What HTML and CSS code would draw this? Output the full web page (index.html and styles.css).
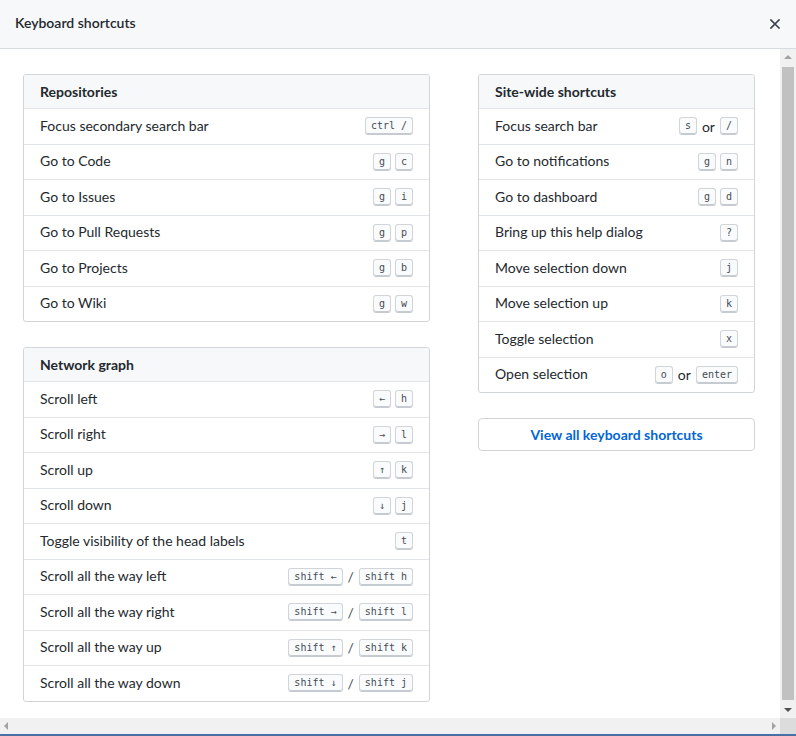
FILE: index.html
```html
<!DOCTYPE html>
<html>
<head>
<meta charset="utf-8">
<link rel="stylesheet" href="styles.css">
</head>
<body>
<div class="dialog">
  <header class="dialog-header">
    <h1 class="dialog-title">Keyboard shortcuts</h1>
    <svg class="close" width="10" height="10" viewBox="0 0 10 10"><path d="M1 1L9 9M9 1L1 9" stroke="#3d444c" stroke-width="1.7" stroke-linecap="square"/></svg>
  </header>
  <div class="frame">
    <div class="upper">
      <div class="content">
        <div class="col col-left">
          <section class="box">
            <div class="box-header">Repositories</div>
            <div class="row"><span>Focus secondary search bar</span><span class="keys"><kbd>ctrl /</kbd></span></div>
            <div class="row"><span>Go to Code</span><span class="keys"><kbd>g</kbd><kbd>c</kbd></span></div>
            <div class="row"><span>Go to Issues</span><span class="keys"><kbd>g</kbd><kbd>i</kbd></span></div>
            <div class="row"><span>Go to Pull Requests</span><span class="keys"><kbd>g</kbd><kbd>p</kbd></span></div>
            <div class="row"><span>Go to Projects</span><span class="keys"><kbd>g</kbd><kbd>b</kbd></span></div>
            <div class="row"><span>Go to Wiki</span><span class="keys"><kbd>g</kbd><kbd>w</kbd></span></div>
          </section>
          <section class="box">
            <div class="box-header">Network graph</div>
            <div class="row"><span>Scroll left</span><span class="keys"><kbd>←</kbd><kbd>h</kbd></span></div>
            <div class="row"><span>Scroll right</span><span class="keys"><kbd>→</kbd><kbd>l</kbd></span></div>
            <div class="row"><span>Scroll up</span><span class="keys"><kbd>↑</kbd><kbd>k</kbd></span></div>
            <div class="row"><span>Scroll down</span><span class="keys"><kbd>↓</kbd><kbd>j</kbd></span></div>
            <div class="row"><span>Toggle visibility of the head labels</span><span class="keys"><kbd>t</kbd></span></div>
            <div class="row"><span>Scroll all the way left</span><span class="keys"><kbd>shift ←</kbd><span class="sep">/</span><kbd>shift h</kbd></span></div>
            <div class="row"><span>Scroll all the way right</span><span class="keys"><kbd>shift →</kbd><span class="sep">/</span><kbd>shift l</kbd></span></div>
            <div class="row"><span>Scroll all the way up</span><span class="keys"><kbd>shift ↑</kbd><span class="sep">/</span><kbd>shift k</kbd></span></div>
            <div class="row"><span>Scroll all the way down</span><span class="keys"><kbd>shift ↓</kbd><span class="sep">/</span><kbd>shift j</kbd></span></div>
          </section>
        </div>
        <div class="col col-right">
          <section class="box">
            <div class="box-header">Site-wide shortcuts</div>
            <div class="row"><span>Focus search bar</span><span class="keys"><kbd>s</kbd><span class="or">or</span><kbd>/</kbd></span></div>
            <div class="row"><span>Go to notifications</span><span class="keys"><kbd>g</kbd><kbd>n</kbd></span></div>
            <div class="row"><span>Go to dashboard</span><span class="keys"><kbd>g</kbd><kbd>d</kbd></span></div>
            <div class="row"><span>Bring up this help dialog</span><span class="keys"><kbd>?</kbd></span></div>
            <div class="row"><span>Move selection down</span><span class="keys"><kbd>j</kbd></span></div>
            <div class="row"><span>Move selection up</span><span class="keys"><kbd>k</kbd></span></div>
            <div class="row"><span>Toggle selection</span><span class="keys"><kbd>x</kbd></span></div>
            <div class="row"><span>Open selection</span><span class="keys"><kbd>o</kbd><span class="or">or</span><kbd>enter</kbd></span></div>
          </section>
          <a class="btn">View all keyboard shortcuts</a>
        </div>
      </div>
      <div class="vscroll">
        <span class="arrow arrow-up"></span>
        <span class="thumb"></span>
        <span class="arrow arrow-down"></span>
      </div>
    </div>
    <div class="hbar">
      <div class="hscroll">
        <span class="arrow arrow-left"></span>
        <span class="arrow arrow-right"></span>
      </div>
      <div class="corner"></div>
    </div>
    <div class="blue-line"></div>
  </div>
</div>
</body>
</html>
```
FILE: styles.css
```css
html, body {
  margin: 0;
  padding: 0;
  background: #fff;
}
body {
  font-family: Lato, "Liberation Sans", sans-serif;
  font-size: 14px;
  color: #24292e;
}
.dialog {
  width: 796px;
  height: 736px;
  display: flex;
  flex-direction: column;
  overflow: hidden;
}
.dialog-header {
  box-sizing: border-box;
  height: 49px;
  flex: none;
  background: #f6f8fa;
  border-bottom: 1px solid #d8dce1;
  display: flex;
  align-items: center;
  justify-content: space-between;
  padding: 0 16px 3px 15px;
}
.dialog-title {
  margin: 0;
  font-size: 14px;
  font-weight: 600;
  color: #24292e;
}
.close {
  margin-top: 2px;
}
.frame {
  flex: 1;
  display: flex;
  flex-direction: column;
  min-height: 0;
}
.upper {
  flex: 1;
  display: flex;
  min-height: 0;
}
.content {
  flex: 1;
  display: flex;
  gap: 48px;
  padding: 25px 0 0 23px;
  overflow: hidden;
}
.col {
  display: flex;
  flex-direction: column;
  gap: 25px;
}
.col-left { width: 407px; }
.col-right { width: 277px; }
.box {
  border: 1px solid #d1d5da;
  border-radius: 3px;
  overflow: hidden;
}
.box-header {
  box-sizing: border-box;
  height: 33px;
  background: #f6f8fa;
  padding: 0 16px 1px;
  display: flex;
  align-items: center;
  font-weight: 700;
}
.row {
  box-sizing: border-box;
  height: 35.5px;
  border-top: 1px solid #e1e4e8;
  padding: 0 16px 2px;
  display: flex;
  align-items: center;
  justify-content: space-between;
}
.keys {
  display: flex;
  align-items: center;
  gap: 4px;
  margin-top: 2px;
}
kbd {
  display: inline-block;
  padding: 3px 5px;
  font-family: "DejaVu Sans Mono", "Liberation Mono", monospace;
  font-size: 10px;
  line-height: 10px;
  color: #444d56;
  background: #fafbfc;
  border: 1px solid #d1d5da;
  border-bottom-color: #c6cbd1;
  border-radius: 3px;
  box-shadow: inset 0 -1px 0 #c6cbd1;
}
.sep {
  color: #444d56;
  margin: 0 1px;
}
.or {
  color: #24292e;
  margin: 0 1px;
}
.btn {
  box-sizing: border-box;
  height: 33px;
  border: 1px solid #d1d5da;
  border-radius: 4px;
  display: flex;
  align-items: center;
  justify-content: center;
  color: #0366d6;
  font-weight: 700;
  background: #fff;
}
.vscroll {
  width: 16px;
  flex: none;
  background: #f1f1f1;
  display: flex;
  flex-direction: column;
  align-items: center;
}
.thumb {
  width: 12px;
  flex: 1;
  background: #c1c1c1;
  margin: 2px 0;
}
.arrow {
  width: 0;
  height: 0;
  flex: none;
}
.arrow-up {
  margin-top: 6px;
  margin-bottom: 6px;
  border-left: 4px solid transparent;
  border-right: 4px solid transparent;
  border-bottom: 4px solid #a3a3a3;
}
.arrow-down {
  margin-top: 6px;
  margin-bottom: 6px;
  border-left: 4px solid transparent;
  border-right: 4px solid transparent;
  border-top: 4px solid #505050;
}
.hbar {
  height: 16px;
  flex: none;
  display: flex;
}
.hscroll {
  flex: 1;
  background: #f1f1f1;
  display: flex;
  align-items: center;
  justify-content: space-between;
  padding: 0 4px;
}
.arrow-left {
  border-top: 4px solid transparent;
  border-bottom: 4px solid transparent;
  border-right: 4px solid #a3a3a3;
}
.arrow-right {
  border-top: 4px solid transparent;
  border-bottom: 4px solid transparent;
  border-left: 4px solid #a3a3a3;
}
.corner {
  width: 16px;
  background: #dcdcdc;
}
.blue-line {
  height: 2px;
  flex: none;
  background: #4a6fa5;
}
```
